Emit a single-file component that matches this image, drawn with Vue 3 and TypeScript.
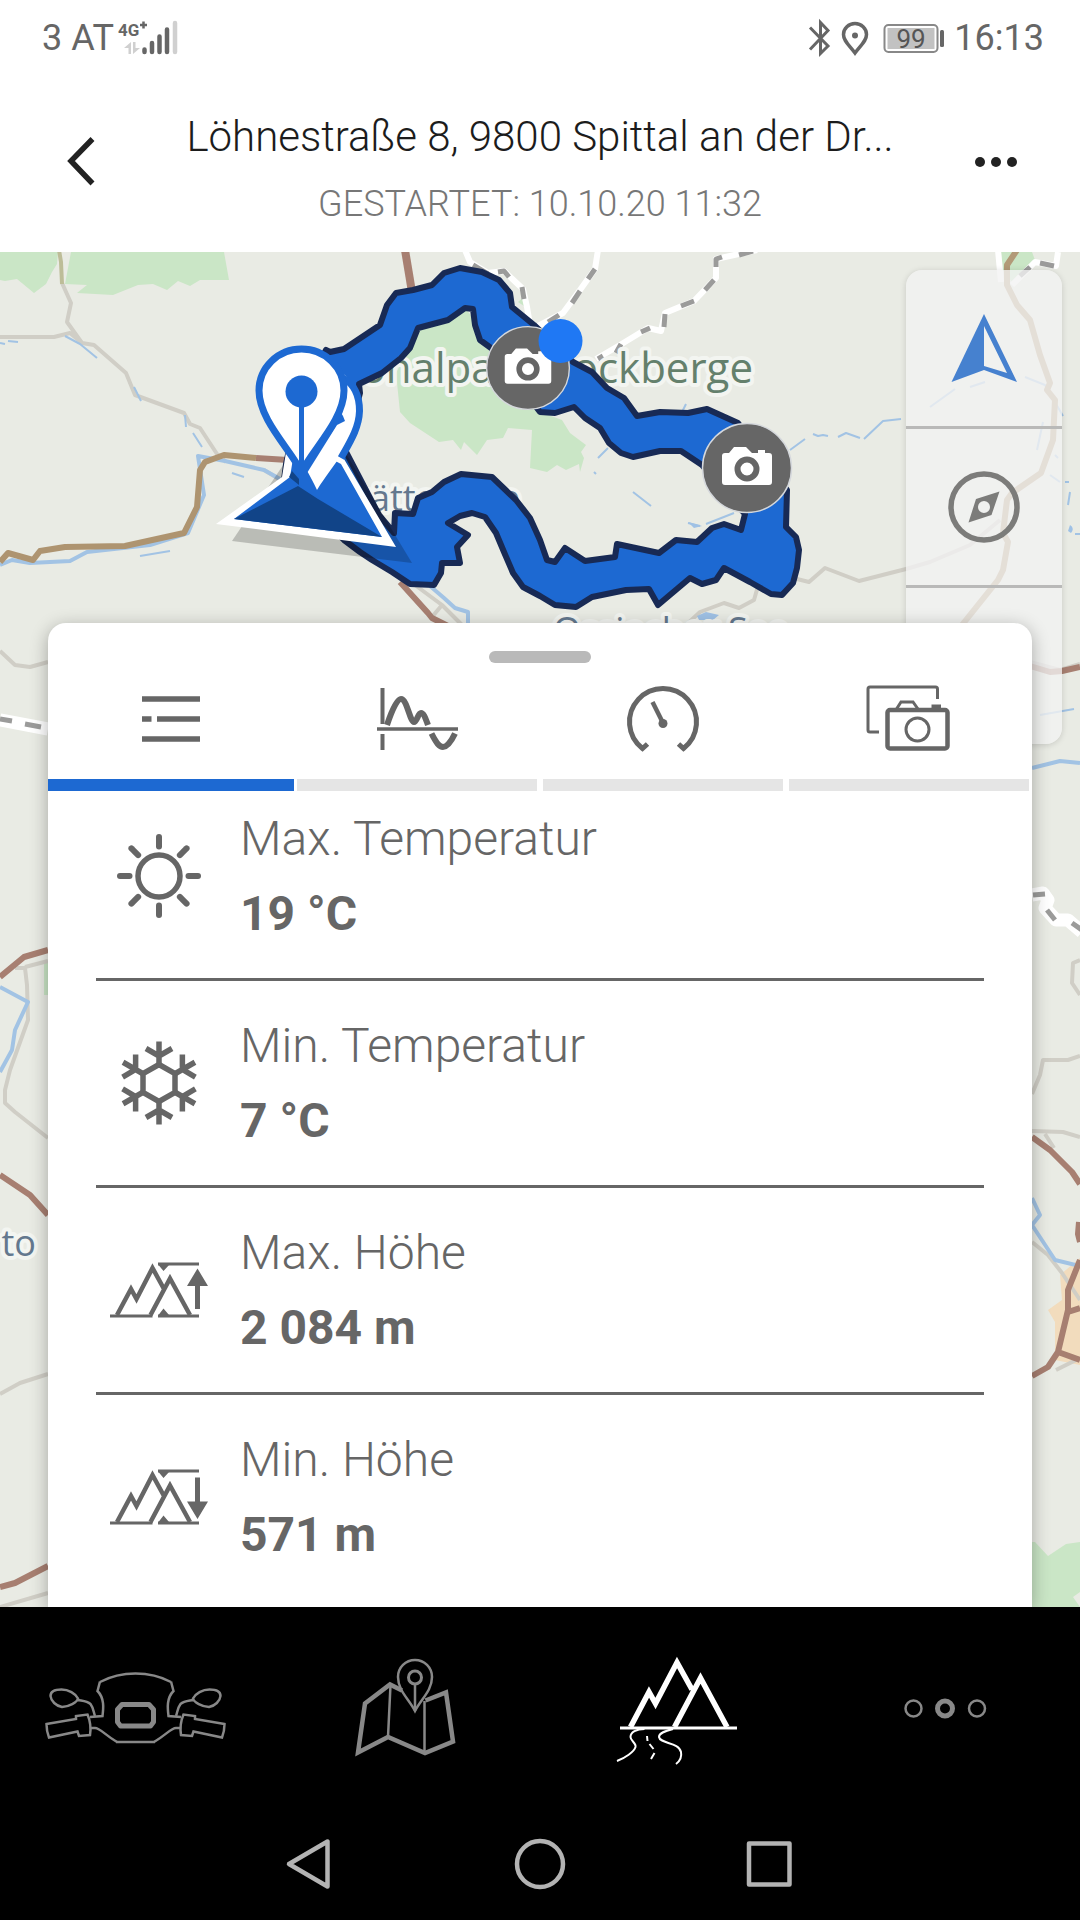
<script setup lang="ts">
interface Stat {
  label: string
  value: string
  icon: 'sun' | 'snow' | 'up' | 'down'
}

const stats: Stat[] = [
  { label: 'Max. Temperatur', value: '19 °C', icon: 'sun' },
  { label: 'Min. Temperatur', value: '7 °C', icon: 'snow' },
  { label: 'Max. Höhe', value: '2 084 m', icon: 'up' },
  { label: 'Min. Höhe', value: '571 m', icon: 'down' },
]

const rayAngles = [0, 45, 90, 135, 180, 225, 270, 315]
const armAngles = [0, 60, 120, 180, 240, 300]

const cameras = [
  { x: 528, y: 368, scale: 0.93 },
  { x: 747, y: 468, scale: 1 },
]
</script>

<template>
  <div class="screen">
    <div class="status">
      <div class="status-side">
        <span>3 AT</span>
        <svg width="60" height="36" viewBox="117 18 60 36" aria-label="4G+">
          <text class="net" x="117" y="34">4G</text>
          <path d="M139 23h7M142.500 19.500v7" stroke="#666" stroke-width="2.500" />
          <path d="M130 40v12h-2.500v-6H123zM132 52V40h2.500v6h4.500z" fill="#d0d0d0" />
          <g stroke="#666" stroke-width="4.500" stroke-linecap="round">
            <path d="M143.500 47.500v2.500M151 41v9M158.500 34.500v15.500M166 27.500v22.500" />
            <path d="M174 21v29" stroke="#d0d0d0" />
          </g>
        </svg>
      </div>
      <div class="status-side">
        <svg width="138" height="36" viewBox="808 18 138 36" aria-label="Akku 99 Prozent">
          <path d="M810 25.500L828 44l-7.500 7.500v-31L828 28.500 810 47.500" fill="none" stroke="#666" stroke-width="3" />
          <path d="M855 51C849 43 843.500 39 843.500 32.500a11.500 11 0 0 1 23 0C866.500 39 861 43 855 51z" fill="none" stroke="#666" stroke-width="3.500" />
          <circle cx="855" cy="33.500" r="3" fill="#666" />
          <rect x="884.500" y="23" width="53" height="27" rx="4" fill="#fff" stroke="#888" stroke-width="2" />
          <rect x="887.500" y="26" width="47" height="21" fill="#c2c2c2" />
          <text class="charge" x="911" y="46" text-anchor="middle">99</text>
          <rect x="940" y="28" width="4" height="17" rx="1.500" fill="#666" />
        </svg>
        <span>16:13</span>
      </div>
    </div>

    <header class="head">
      <button class="plain" aria-label="Zurück">
        <svg width="60" height="60" viewBox="50 134 60 60">
          <path d="M92.500 139L71 161l21.500 22.500" fill="none" stroke="#222" stroke-width="5.500" />
        </svg>
      </button>
      <div class="titles">
        <h1>Löhnestraße 8, 9800 Spittal an der Dr...</h1>
        <p>GESTARTET: 10.10.20 11:32</p>
      </div>
      <button class="plain" aria-label="Mehr">
        <svg width="60" height="60" viewBox="970 134 60 60" fill="#222">
          <circle cx="980" cy="162" r="5" /><circle cx="996" cy="162" r="5" /><circle cx="1012" cy="162" r="5" />
        </svg>
      </button>
    </header>

    <main class="stage">
      <svg class="map" viewBox="0 252 1080 1355" preserveAspectRatio="xMidYMin slice" role="img" aria-label="Karte mit Route">
        <rect y="252" width="1080" height="1355" fill="#e9ebe4" />
        <g fill="#cae6c6">
          <path d="M0 252h58l-1 12-5 8-6 12-12 9-17-14-12 2-5-1zM71 252h153l5 28h-29l-10 6-12-5-11 9-14-6-15 1-25 10-36-2 10-8-22-1z" />
          <path d="M466 309l-48 20-22 44 4 39 10 11 29 19 14-2 8 10 3-8 13 13 10-15 16-2 5-10 24 2-2 38 17 4 10-7 9 5 13-6 1 8 4-14-3-6 5-7-16-12-8-13-22-8-50-72z" />
          <path d="M1001 252h31l3 8-23 22-9-12zM518 302l7-6 2 12z" />
          <path d="M1032 1542l3 0 13 14 18-12 14-2v50l-7 5 7 10h-48zM44 963h4v32h-4z" />
        </g>
        <path d="M1060 1275l20-17v107l-25-5v-38l-7-12 14-10z" fill="#f2dcbd" />
        <g class="line grey">
          <path d="M0 337h54l16-4 12 10 12 2 32 28 9 22 49 18 6 11 10 4 17 26 9 8M82 343l-15-21 4-19-9-20" />
          <path d="M264 470l20 12M415 585l27 20 20 20M442 605l-10 12" />
          <path d="M793 578l16 4 16-14 34 13 47-12 24-7 40-17 30-25M686 625l14-13 24-9 15 5 15-8 4-14" />
          <path d="M1030 662l30 8 20-6M1080 960l-7 3-1 20 8 12M1032 1094l8-19 3-15h25l12-4M1032 1131l31 1 17 5M1045 1134l9 14M1032 1242l16 13 14 18 18 27M1056 1370l24-12" />
          <path d="M0 651l15 14 15 2 18-5M15 968h10l2 17 1 35-18 50-5 20v13l10 9 33 26M25 967l23-6M0 1394l20-11 28-9M0 1607l48-14" />
        </g>
        <path class="line" d="M62 284l-1-22-2-12" stroke="#bdbd98" stroke-width="4" />
        <g class="line blue">
          <path d="M0 565l12-5 18 3 40-2 17-9 63-7 38-12 16-38-6-39 27 5 39 9 16 9M430 586l14 12 11 10 13 4v15" />
          <path d="M1032 768l28-7 20 2M1032 1198l8 17-8 10 23 35 25 6M0 987l28 15-13 28-3 20-12 22" />
        </g>
        <g class="line stream">
          <path d="M65 336l15 8 17 14M0 343l5 1M8 341l10 1M134 387l7 14M185 415l1 12M193 433l9 14M232 473l12 4M140 556l30-5" />
          <path d="M790 450l15-11M813 434l5 2 5-1 5 1M838 437l8-4 14 5M864 439l19-18 18-2M633 492l18 14M688 523l12 3M706 524l28-11M682 412l4-8M598 458l10-10M594 472l2 2" />
          <path d="M1065 482h4M1068 505l2-13M1075 534h5M930 407l25-18M970 387l15-5M1025 377l20 8 18 31M1037 450l6-28M1055 455l3 3M1050 475l10 7M1040 715l34-6" />
        </g>
        <path d="M697 616l9-4 13 3-6 5h-14zM1070 525q5 3 1 8l-3-2zM688 522l14 4-8 2z" fill="#9fc1e5" />
        <path class="line" d="M0 562l8-9 25 7 7-9 25-4 60-1 59-13 13-26 3-37 5-8 19-7 32 3" stroke="#ae9470" stroke-width="6" />
        <path class="line" d="M1017 250l-10 15v20l10 20 13 15 10 35 10 28-3 7 8 10-2 40-12 33-29 20-5 7-4 33 5 9-5 28-5 10-36 45" stroke="#b29a78" stroke-width="6" />
        <g class="line red">
          <path d="M256 458l32 2M400 582l28 31 4 5 20 10" />
          <path d="M405 250l7 42" stroke-width="8" />
          <path d="M1030 666l20 6 12-1 18-4M1032 1137l18 13 22 22 8 12M1079 1222l-1 12 2 8M1080 1260l-12 30v20l-10 42 22 8M1068 1312l12-4M1058 1352l-10 15-16 9" />
          <path d="M0 977l24-20 24-7M0 1175l30 20 18 20M0 1587l15-4 33-17" />
        </g>
        <g class="line" stroke="#fff" stroke-width="6">
          <path d="M465 250l5 12 18 11 16-2 19 18 4 18 3 18M598 250l-3 19-15 21-17 23-25 13M757 250l-41 9v19l-22 23-29 12-4 18-13-3-28 17-24 14M998 250l3 32M1012 285l23-23 21 4 2-14" />
          <path d="M0 720l48 9M1032 895l11-2 5 7-3 8 11 12h12l14 12" stroke-width="13" />
        </g>
        <g class="line" stroke="#9b9b9a" stroke-width="5">
          <path d="M473 265l15 9M498 272l6-1 5 6M522 287l2 12M595 269l-7 10M580 291l-8 12M559 315l-11 7" />
          <path d="M753 251l-14 4M722 257l-6 2v8M714 280l-9 10M694 301l-13 5M665 314l-1 13M650 328l-9 4M621 344l-5 9M603 356l-5 3M1040 263l14 3M1030 267l-10 9" />
          <path d="M0 719l12 2M25 724l16 3M1033 895l12-1M1047 910l8 10M1072 923l10 7" />
        </g>

        <g class="label park">
          <text x="280" y="383">Nationalpark</text>
          <text x="753" y="383" text-anchor="end">Nockberge</text>
        </g>
        <g class="label place">
          <text x="520" y="511" text-anchor="end">Millstätter See</text>
          <text x="553" y="643">Ossiacher See</text>
          <text x="36" y="1256" text-anchor="end">to</text>
        </g>

        <path
          class="route"
          fill-rule="evenodd"
          d="M326 350L330 352 344 349 362 337 380 325 387 305 396 293 413 290 432 285 444 273 460 268 482 272 499 280 510 293 512 307 534 325 573 362 592 372 607 388 624 398 637 416 660 412 688 413 707 409 738 423 787 490 786 527 796 537 799 550 797 568 793 583 782 595 771 594 750 582 724 568 716 580 702 584 690 578 658 605 649 589 626 590 592 597 576 607 555 605 540 596 523 587 513 573 504 552 496 533 485 517 472 513 460 516 448 523 468 535 457 547 460 563 442 563 441 573 434 585 410 584 392 572 372 560 360 552 344 540 284 480 286 464 300 400zM360 393L359 384 382 373 401 358 410 348 418 328 448 320 465 308 473 309 475 325 480 340 491 348 540 412 555 413 574 407 585 418 600 428 609 443 621 453 633 457 660 451 681 451 702 465 745 514 741 530 724 524 712 528 697 542 676 540 659 553 617 544 615 557 585 561 565 548 555 562 547 560 540 540 530 518 516 500 492 477 461 474 444 482 432 492 418 498 413 514 395 513 394 533 379 515 345 450z"
        />

        <path d="M232 541L412 563 345 452 300 440z" fill="#000" fill-opacity=".2" />
        <path d="M216 524L282 477 288 440 331 437 396 547z" fill="#fff" />
        <path d="M234 519L290 477 296 440 341 464 382 537z" fill="#1d69d2" />
        <path d="M234 519L298 486 318 499 382 537zM289 477l10 8v-6l-7-8z" fill="#114488" />
        <path d="M317 490C305 462 278 432 278 406a40.500 43 0 0 1 82 6C360 436 333 464 317 490z" fill="#fff" />
        <path d="M343 378C354 384 359.500 396 359.500 411 359 428 350 442 341 458" fill="none" stroke="#1d69d2" stroke-width="7" />
        <path d="M340 411l3 5 2 5-8 4-30 48-15-30z" fill="#1d69d2" />
        <path d="M301.500 472C291 450 259 420 259 390.500a42.500 41.500 0 0 1 85 0C344 420 312 450 301.500 472z" fill="#fff" stroke="#1d69d2" stroke-width="7" />
        <path d="M301.500 391v78" stroke="#1d69d2" stroke-width="5" />
        <circle cx="301.500" cy="391.500" r="16" fill="#1d69d2" />

        <g v-for="cam in cameras" :key="cam.x" :transform="`translate(${cam.x} ${cam.y}) scale(${cam.scale})`">
          <circle r="44.500" fill="#666" stroke="#d5d8dc" stroke-width="1.500" />
          <path d="M-22-15h4l5-6h12l6 6h6v-3h7v3h4q3 0 3 3v26q0 3-3 3h-44q-3 0-3-3v-26q0-3 3-3z" fill="#fff" />
          <circle cy="1" r="9.500" fill="#fff" stroke="#666" stroke-width="6" />
        </g>
        <circle cx="560.500" cy="341" r="22" fill="#1f78f4" />
      </svg>

      <div class="tools">
        <button aria-label="Position">
          <svg width="80" height="80" viewBox="944 308 80 80">
            <path d="M984 314L951.500 382 984 370z" fill="#4681cf" />
            <path d="M984 314l33 68-33-12zM984 326v40l23 7z" fill="#4681cf" fill-rule="evenodd" />
          </svg>
        </button>
        <button aria-label="Kompass">
          <svg width="80" height="80" viewBox="944 467 80 80">
            <circle cx="984" cy="507" r="33" fill="none" stroke="#7c7c7a" stroke-width="5.500" />
            <path d="M999.500 491.500l-8 23.500-23 7.500 7.500-23.500zM990 507a6 6 0 1 0-12 0 6 6 0 1 0 12 0z" fill="#7c7c7a" fill-rule="evenodd" />
          </svg>
        </button>
        <button aria-label="Ebenen"></button>
      </div>

      <section class="card">
        <div class="handle"></div>
        <nav class="tabs">
          <button class="active" aria-label="Liste">
            <svg width="96" height="80" viewBox="123 679 96 80">
              <path d="M142 699h58M142 719h9.500M157 719h43M142 739h58" stroke="#666" stroke-width="5.500" />
            </svg>
          </button>
          <button aria-label="Verlauf">
            <svg width="96" height="80" viewBox="369 679 96 80" fill="none" stroke="#666">
              <path d="M382.500 688v36M382.500 734v16" stroke-width="4" />
              <path d="M377 729h81" stroke-width="3.500" />
              <path d="M387 725c5-15 10-26 14-26 6 0 9 23 13 23 3 0 4-9 7-9s5 7 7 12M431.500 733.500c5 10 8 13.500 11.500 13.500s8-5 12-13.500" stroke-width="6" />
            </svg>
          </button>
          <button aria-label="Tempo">
            <svg width="96" height="80" viewBox="615 679 96 80" fill="none" stroke="#666">
              <path d="M647.500 744l-5 4.500a33.500 33.500 0 1 1 41 0l-5-4.500" stroke-width="5" />
              <path d="M652.500 702l10.500 21" stroke-width="4.500" />
              <circle cx="663" cy="723.500" r="4.500" fill="#666" stroke="none" />
            </svg>
          </button>
          <button aria-label="Fotos">
            <svg width="96" height="80" viewBox="861 679 96 80" fill="none" stroke="#666" stroke-width="3">
              <path d="M879 732h-9q-2 0-2-2v-41q0-2 2-2h65.500q2 0 2 2v10" />
              <path d="M896.500 709l4.500-7h12l5 7" />
              <rect x="887.500" y="710" width="60" height="38.500" rx="2.500" stroke-width="4.500" />
              <path d="M931.500 706.500h9.500" stroke-width="4" />
              <circle cx="917.500" cy="729.500" r="11.500" />
            </svg>
          </button>
        </nav>
        <ul class="stats">
          <li v-for="stat in stats" :key="stat.label">
            <span class="icon">
              <svg v-if="stat.icon === 'sun'" width="100" height="96" viewBox="-50 -48 100 96" fill="none" stroke="#666">
                <circle r="21" stroke-width="5.500" />
                <path v-for="a in rayAngles" :key="a" :transform="`rotate(${a})`" d="M0-29.500v-9.500" stroke-width="6" stroke-linecap="round" />
              </svg>
              <svg v-else-if="stat.icon === 'snow'" width="100" height="96" viewBox="-50 -48 100 96" fill="none" stroke="#666" stroke-width="5.500">
                <path d="M0-18.500L16-9.500V9.500L0 18.500-16 9.500V-9.500z" />
                <path v-for="a in armAngles" :key="a" :transform="`rotate(${a})`" d="M0-18.500v-23M-13-34.500L0-27l13-7.500" />
              </svg>
              <svg v-else width="100" height="96" viewBox="109 1242 100 96" fill="none" stroke="#666">
                <path d="M110 1316h42.500M158 1316h41M158 1264h41" stroke-width="3" />
                <path d="M117 1315l14-26 5.500 10 16-31 11.500 21M150.500 1315l19.500-36.500 20 36.500" stroke-width="4.500" />
                <path d="M158.500 1265h10.500l-5.500 6zM158.500 1315l5-6.500 5.500 6.500z" fill="#666" stroke="none" />
                <path v-if="stat.icon === 'up'" d="M197.500 1268.500l10.500 17.500h-8v23h-5v-23h-8z" fill="#666" stroke="none" />
                <path v-else d="M195 1270.500h5v24h8l-10.500 17.500-10.500-17.500h8z" fill="#666" stroke="none" />
              </svg>
            </span>
            <div>
              <p class="name">{{ stat.label }}</p>
              <p class="value">{{ stat.value }}</p>
            </div>
          </li>
        </ul>
      </section>
    </main>

    <footer>
      <nav class="appnav">
        <a href="#" aria-label="Fahren">
          <svg width="200" height="120" viewBox="35 1650 200 120" fill="none" stroke="#888" stroke-width="2.500">
            <path d="M100 1682q16-8.500 35.500-8.500T171 1682M116 1742h39" />
            <g v-for="side in [1, -1]" :key="side" :transform="`matrix(${side} 0 0 1 ${side === 1 ? 0 : 271} 0)`">
              <path d="M100 1681.500l-2.500 9.500c7 7 6 17 5 25l-12.500 1M91 1728h4c5 0 10 7 22 14" />
              <path d="M46.500 1724l29.500-5v-3l11.500-1.500c3 7 3.500 14 2.500 20.500l-11 1-1.500-4.500L49 1737.500c-2-5-2.500-9-2.500-13.500zM50.500 1696c0-5 5-6.500 11-6.500 7 0 14 4 16.500 9-1 4-9 8-16 8.500-6-1-11-6-11.500-11zM78 1700c5 1 9 1 12.500 4 3 4 3 8 4.500 12" />
            </g>
            <path d="M122 1704.500h27l4.500 5V1722l-3 4h-30l-3-4v-12.500z" stroke-width="5" stroke-linejoin="round" />
          </svg>
        </a>
        <a href="#" aria-label="Karte">
          <svg width="200" height="120" viewBox="305 1650 200 120" fill="none" stroke="#888">
            <path d="M402 1690.500l-12-6-25 19-7 49 30-15.500 37 16 28-11.500-7-49-20.500 8" stroke-width="4.500" />
            <path d="M390.500 1685l-2.500 52M424.500 1701v51M415 1678v33" stroke-width="2.500" />
            <path d="M415 1711c-6-12-17-20-17-34a17 17 0 0 1 34 0c0 14-11 22-17 34z" stroke-width="2.500" />
            <circle cx="415" cy="1677.500" r="6.500" fill="#000" stroke-width="3" />
          </svg>
        </a>
        <a href="#" aria-label="Touren" aria-current="page">
          <svg width="200" height="120" viewBox="575 1650 200 120" fill="none" stroke="#fff">
            <path d="M620 1728h117" stroke-width="3" />
            <path d="M630.500 1727l18.500-35 6.500 11.500 21.500-41 15 27M674.500 1727l26-49 26.500 49" stroke-width="5.500" />
            <path d="M617 1761c8-3 17-9 18.500-14 1-4-5-6-5-10 0-5 6-8 14-8M673 1729c-8 2-14 4-14 8 1 7 20 5 22 15 1 5-1 9-5 12M647 1736l.5 5M649.500 1744l4 5M654.500 1753l-3.500 6" stroke-width="2" />
          </svg>
        </a>
        <a href="#" aria-label="Weitere">
          <svg width="200" height="120" viewBox="845 1650 200 120" fill="none" stroke="#888" stroke-width="2.500">
            <circle cx="913.500" cy="1708.500" r="8" /><circle cx="945" cy="1708.500" r="7.500" stroke-width="5" /><circle cx="977" cy="1708.500" r="8" />
          </svg>
        </a>
      </nav>
      <div class="sysnav">
        <button class="plain" aria-label="System zurück">
          <svg width="60" height="60" viewBox="280 1834 60 60"><path d="M327.500 1841.500v45L289 1864z" /></svg>
        </button>
        <button class="plain" aria-label="Startbildschirm">
          <svg width="60" height="60" viewBox="510 1834 60 60"><circle cx="540" cy="1864" r="23" /></svg>
        </button>
        <button class="plain" aria-label="Letzte Apps">
          <svg width="60" height="60" viewBox="740 1834 60 60"><rect x="749" y="1843.500" width="40.500" height="41" /></svg>
        </button>
      </div>
    </footer>
  </div>
</template>

<style>
body {
  margin: 0;
  background: #fff;
}
</style>

<style scoped>
.screen {
  display: flex;
  flex-direction: column;
  min-height: 100vh;
  font-family: Roboto, "Liberation Sans", sans-serif;
  background: #fff;
}
h1,
p,
ul {
  margin: 0;
  padding: 0;
}
svg {
  display: block;
}
button {
  border: 0;
  padding: 0;
  background: none;
  font: inherit;
}
.plain {
  display: flex;
  align-items: center;
  justify-content: center;
}
.status {
  display: flex;
  justify-content: space-between;
  align-items: center;
  height: 75px;
  padding: 0 36px 0 42px;
  box-sizing: border-box;
  font-size: 36px;
  line-height: 48px;
  color: #666;
}
.status-side {
  display: flex;
  align-items: center;
  gap: 4px;
}
.status-side:last-child {
  gap: 8px;
}
.status svg {
  overflow: visible;
}
.net {
  font-size: 17px;
  font-weight: 700;
  fill: #666;
}
.charge {
  font-size: 26px;
  fill: #555;
}
.head {
  display: grid;
  grid-template-columns: 160px minmax(0, 1fr) 160px;
}
.titles {
  padding: 34px 0 24px;
  text-align: center;
}
h1 {
  margin-bottom: 15px;
  font-size: 42px;
  line-height: 56px;
  font-weight: 300;
  color: #1c1c1c;
  white-space: nowrap;
  overflow: hidden;
  text-overflow: ellipsis;
}
.titles p {
  font-size: 36px;
  line-height: 48px;
  font-weight: 300;
  color: #777;
}
.stage {
  position: relative;
  flex: 1;
  display: flex;
  flex-direction: column;
  overflow: hidden;
  padding: 371px 48px 0;
}
.map {
  position: absolute;
  inset: 0;
  width: 100%;
  height: 100%;
}
.line {
  fill: none;
  stroke-linejoin: round;
}
.grey {
  stroke: #d0cec6;
  stroke-width: 4;
}
.blue {
  stroke: #a2c3e4;
  stroke-width: 4;
}
.stream {
  stroke: #a2c3e4;
  stroke-width: 2;
}
.red {
  stroke: #a77f71;
  stroke-width: 6;
}
.label {
  stroke: #f3f5f1;
  stroke-width: 8;
  stroke-linejoin: round;
  paint-order: stroke;
}
.park {
  font: 42px "Open Sans", "Noto Sans", sans-serif;
  fill: #64806c;
}
.place {
  font: 36px "Open Sans", "Noto Sans", sans-serif;
  fill: #64788e;
}
.route {
  fill: #1d69d2;
  stroke: #182a55;
  stroke-width: 6;
  stroke-linejoin: round;
}
.tools {
  position: absolute;
  top: 18px;
  right: 18px;
  width: 156px;
  border-radius: 16px;
  background: rgba(242, 242, 242, 0.78);
  box-shadow: 0 1px 6px rgba(0, 0, 0, 0.15);
}
.tools button {
  display: flex;
  align-items: center;
  justify-content: center;
  width: 100%;
  height: 156px;
}
.tools button + button {
  box-sizing: content-box;
  border-top: 3px solid #b9b9b8;
}
.card {
  position: relative;
  flex: 1;
  padding-top: 28px;
  border-radius: 18px 18px 0 0;
  background: #fff;
  box-shadow: 0 4px 18px rgba(0, 0, 0, 0.3);
}
.handle {
  width: 102px;
  height: 12px;
  margin: 0 auto;
  border-radius: 6px;
  background: #b9b9b9;
}
.tabs {
  display: flex;
}
.tabs button {
  flex: 1;
  display: flex;
  flex-direction: column;
  align-items: center;
  gap: 20px;
  padding-top: 16px;
}
.tabs button::after {
  content: "";
  align-self: stretch;
  height: 12px;
  margin: 0 3px;
  background: #e5e5e5;
}
.tabs .active::after {
  margin: 0;
  background: #1d69d2;
}
.stats {
  padding: 0 48px;
  list-style: none;
}
.stats li {
  display: flex;
  align-items: center;
  gap: 18px;
  padding: 27px 0;
  border-bottom: 3px solid #666;
  color: #666;
  font-size: 48px;
  line-height: 75px;
}
.stats li:first-child {
  padding-top: 10px;
}
.stats li:last-child {
  border-bottom: 0;
}
.icon {
  display: flex;
  justify-content: center;
  width: 126px;
}
.name {
  font-weight: 300;
}
.value {
  font-weight: 700;
}
footer {
  background: #000;
}
.appnav {
  display: flex;
  padding: 43px 0 37px;
}
.appnav a {
  flex: 1;
  display: flex;
  justify-content: center;
}
.sysnav {
  display: flex;
  justify-content: center;
  height: 113px;
}
.sysnav button {
  width: 230px;
}
.sysnav svg {
  fill: none;
  stroke: #b3b3b3;
  stroke-width: 4.5;
  stroke-linejoin: round;
}
</style>
